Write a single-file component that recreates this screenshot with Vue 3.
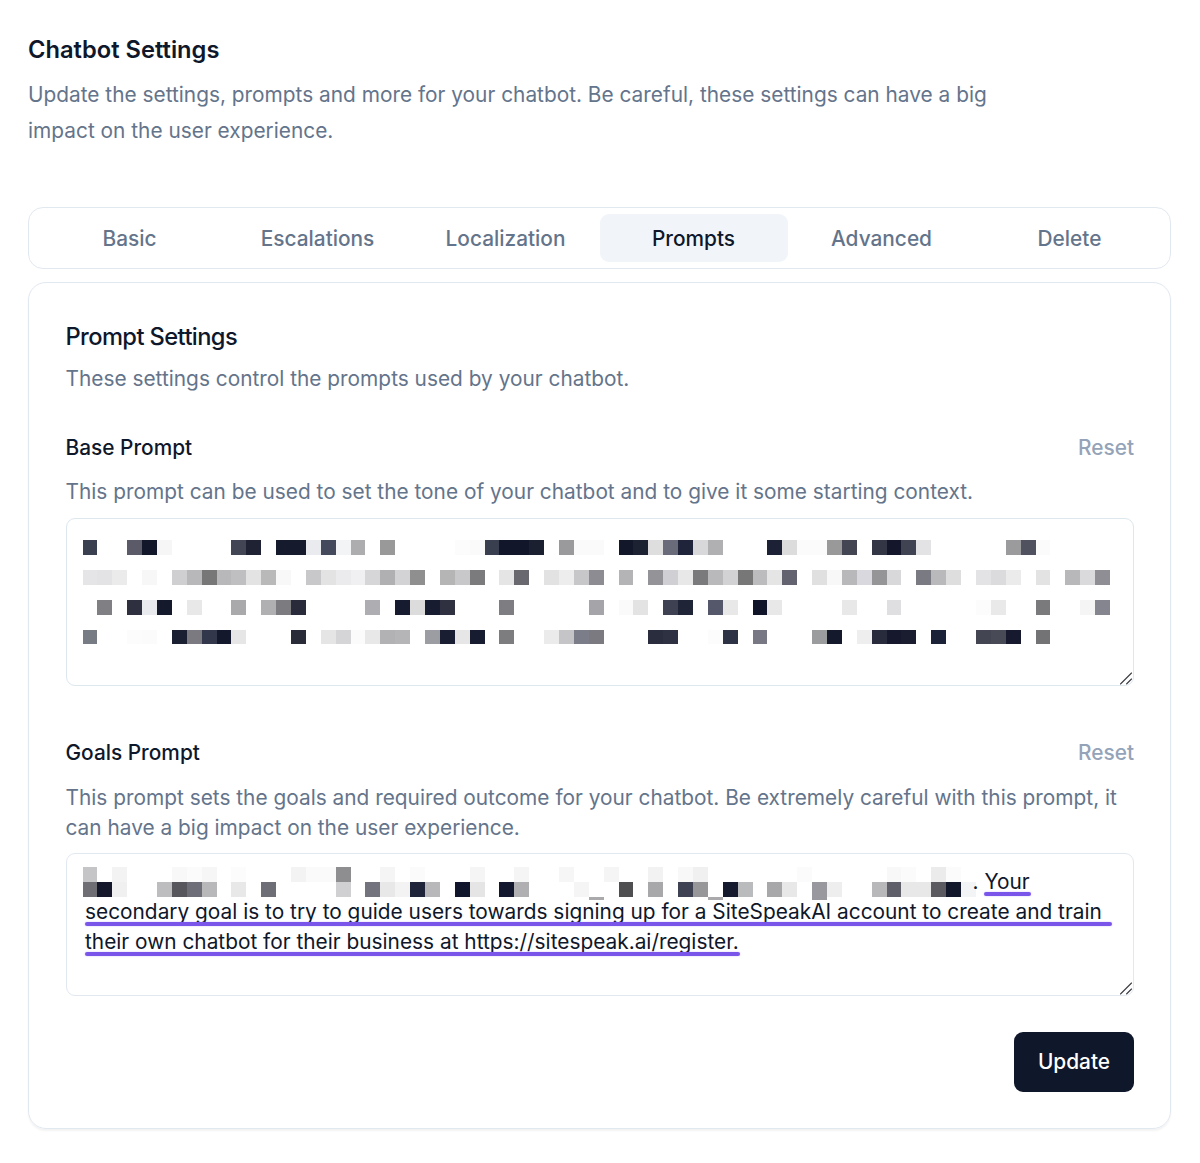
<script setup>
const parse = (spec) => {
  const cells = Array(69).fill(null).map(() => ({ bg: 'transparent', low: '' }))
  spec.trim().split(/\s+/).forEach((item) => {
    const [i, c] = item.split(':')
    if (c.startsWith('-')) cells[+i].low = '#' + c.slice(1)
    else if (c.startsWith('+')) { cells[+i].bg = '#' + c.slice(1); cells[+i].low = '#' + c.slice(1) }
    else cells[+i].bg = '#' + c
  })
  return cells
}
const cellStyle = (c) => ({ background: c.bg, boxShadow: c.low ? `0 3px 0 ${c.low}` : 'none' })

const tabs = ['Basic', 'Escalations', 'Localization', 'Prompts', 'Advanced', 'Delete']

const baseRows = [
  '0:3a4050 3:5a5a68 4:12182a 5:f6f6f7 10:414554 11:1e2232 13:151b2c 14:151b2c 15:e9ebee 16:444a5c 17:f3f4f5 18:adadb0 20:999999 25:fcfcfc 26:fafafa 27:3a3f50 28:11162a 29:11162a 30:1b2030 32:9a9a9c 33:fafafa 34:fafafa 36:12172a 37:1c2232 38:dedede 39:6a6b7a 40:20243a 41:d8d8da 42:b0b0b2 46:1c2135 47:dcdcdc 48:fbfbfb 49:fbfbfb 50:999999 51:434552 53:333645 54:14172b 55:404352 56:e3e3e6 62:9b9b9d 63:50525f 64:fbfbfb',
  '0:e5e5e7 1:e3e3e5 2:ebebec 4:f7f7f7 6:cfcfd2 7:b8b8ba 8:777777 9:b8b8ba 10:bfbfc2 11:e3e3e4 12:b9b9ba 13:f8f8f8 15:c8c8ca 16:e3e3e4 17:ebebed 18:f0f0f2 19:d6d6d9 20:b0b0b3 21:d3d3d6 22:8f8f8f 24:b5b5b5 25:c8c8ca 26:7b7b7e 28:e5e5e6 29:68686e 31:e2e2e3 32:ededee 33:c7c7ca 34:8c8c92 36:b4b4b6 38:949498 39:d0d0d4 40:e8e8e8 41:7a7a7c 42:b9b9bb 43:d2d2d4 44:777777 45:bcbcbe 46:e5e5e5 47:62636f 49:e0e0e1 50:f8f8f8 51:b8b8ba 52:d8d8de 53:959598 54:d8d8da 56:7a7a82 57:b9b9bb 58:dededf 60:e3e3e5 61:dbdbdd 62:ebebec 64:e3e3e4 66:b8b8ba 67:dadadc 68:8e8e94',
  '1:808084 3:2e3040 4:e8eaed 5:14192b 7:e8e8e8 10:a9a9ac 12:b0b0b2 13:7c7c80 14:292b3a 19:aeaeb2 21:171b30 22:dcdcdd 23:181c30 24:2f3040 28:7e7e82 34:a5a5a9 36:fafafa 37:e3e3e4 39:3e4152 40:1f2436 42:55576a 43:e8e8e9 45:0f1428 46:e8e8e9 51:e8e8e9 54:dfdfe1 60:fcfcfc 61:e9e9ea 64:7a7a7c 67:f5f5f5 68:858590',
  '0:777b84 3:fcfcfc 4:fbfbfb 6:1a1f32 7:7a7a80 8:33374c 9:14182c 10:e6e6e7 14:292b38 16:e5e5e6 17:d5d5d8 18:fbfbfb 19:e8e8e9 20:b2b2b4 21:b5b5b8 23:9b9da2 24:1a1e32 25:e6e6e7 26:171c30 28:7d7d80 31:ebebec 32:c5c5c8 33:7b7d88 34:7a7a80 38:2a2d3e 39:2e3142 42:fcfcfc 43:2d3244 45:777884 49:9b9c9e 50:141a2c 52:eeeeef 53:272b3c 54:16192d 55:1a1d30 57:1b2136 60:434652 61:484a56 62:171a2e 64:737376'
].map(parse)

const goalsTop = parse('0:c5c5c7 2:f3f3f3 6:f8f8f8 7:fbfbfb 8:f6f6f6 10:fcfcfc 14:f3f3f3 15:fafafa 16:fafafa 17:8e8e90 20:f5f5f5 22:fbfbfb 26:f5f5f5 29:f5f5f5 32:f6f6f6 35:f5f5f5 38:f2f2f2 40:f8f8f8 41:f0f0f0 48:fbfbfb 54:f8f8f8 55:fbfbfb 57:ebebec 58:fbfbfb')
const goalsBottom = parse('0:6e6e74 1:14182a 2:f0f0f0 5:bdbdbf 6:56565c 7:6e6e78 8:b8b8ba 10:e8e8e9 12:6e6e76 17:d0d0d2 19:72737c 20:e8e8e8 21:f3f3f3 22:20243a 23:b8b8ba 25:12162c 26:e5e5e6 28:14182e 29:b0b0b2 33:f5f5f5 34:-aaaaac 36:4f4f52 38:a8a8aa 40:3e4252 41:979799 42:-aaaaac 43:151a2e 44:b9bbbc 46:a8a8aa 47:e8e8e9 49:+98989e 50:eeeeee 53:b8b8ba 54:5e5f68 55:e8e8e9 56:e8e8e9 57:5a5a60 58:12172a 59:f3f4f5').slice(0, 60)
</script>

<template>
  <main class="page">
    <header class="intro">
      <h1>Chatbot Settings</h1>
      <p>Update the settings, prompts and more for your chatbot. Be careful, these settings can have a big impact on the user experience.</p>
    </header>

    <nav class="tabs">
      <button v-for="tab in tabs" :key="tab" class="tab" :class="{ active: tab === 'Prompts' }">{{ tab }}</button>
    </nav>

    <section class="card">
      <h2>Prompt Settings</h2>
      <p class="sub">These settings control the prompts used by your chatbot.</p>

      <div class="field base">
        <div class="label-row">
          <label>Base Prompt</label>
          <span class="reset">Reset</span>
        </div>
        <p class="help">This prompt can be used to set the tone of your chatbot and to give it some starting context.</p>
        <div class="box base-box">
          <div v-for="(row, r) in baseRows" :key="r" class="mosaic-row">
            <i v-for="(c, i) in row" :key="i" class="cell" :style="cellStyle(c)"></i>
          </div>
          <svg class="grip" width="14" height="14" viewBox="0 0 14 14" aria-hidden="true">
            <path d="M1.5 13 L12.5 2 M7.5 13 L12.5 8" fill="none" stroke="#3a3d44" stroke-width="1.1" stroke-linecap="round" />
          </svg>
        </div>
      </div>

      <div class="field goals">
        <div class="label-row">
          <label>Goals Prompt</label>
          <span class="reset">Reset</span>
        </div>
        <p class="help">This prompt sets the goals and required outcome for your chatbot. Be extremely careful with this prompt, it can have a big impact on the user experience.</p>
        <div class="box goals-box">
          <div class="mosaic-row">
            <i v-for="(c, i) in goalsTop" :key="i" class="cell" :style="cellStyle(c)"></i>
          </div>
          <div class="mosaic-row with-text">
            <i v-for="(c, i) in goalsBottom" :key="i" class="cell" :style="cellStyle(c)"></i>
            <span class="first-line">. <span class="mark your">Your</span></span>
          </div>
          <div class="line"><span class="mark wide">secondary goal is to try to guide users towards signing up for a SiteSpeakAI account to create and train</span></div>
          <div class="line"><span class="mark">their own chatbot for their business at https://sitespeak.ai/register.</span></div>
          <svg class="grip" width="14" height="14" viewBox="0 0 14 14" aria-hidden="true">
            <path d="M1.5 13 L12.5 2 M7.5 13 L12.5 8" fill="none" stroke="#3a3d44" stroke-width="1.1" stroke-linecap="round" />
          </svg>
        </div>
      </div>

      <div class="actions">
        <button class="update">Update</button>
      </div>
    </section>
  </main>
</template>

<style>
html, body { margin: 0; background: #fff; }
</style>

<style scoped>
.page {
  box-sizing: border-box;
  width: 1200px;
  height: 1163px;
  padding: 32px 29px 0 28px;
  font-family: Inter, "Liberation Sans", sans-serif;
  color: #0f172a;
  background: #fff;
}
.intro { height: 175px; }
h1 {
  margin: 0;
  font-size: 23.7px;
  line-height: 36px;
  font-weight: 600;
}
.intro p {
  margin: 9px 0 0;
  width: 1000px;
  font-size: 20.85px;
  line-height: 36px;
  color: #64748b;
}
.tabs {
  box-sizing: border-box;
  height: 62px;
  display: grid;
  grid-template-columns: repeat(6, 1fr);
  padding: 6px 6.5px;
  border: 1.5px solid #e2e8f0;
  border-radius: 15px;
}
.tab {
  border: 0;
  background: none;
  border-radius: 9px;
  font: 500 20.85px/30px Inter, "Liberation Sans", sans-serif;
  color: #64748b;
  padding: 2px 0 0;
}
.tab.active {
  background: #f1f5f9;
  color: #0f172a;
}
.card {
  box-sizing: border-box;
  height: 847px;
  margin-top: 13px;
  padding: 36px 36px 0 36.5px;
  border: 1.5px solid #e2e8f0;
  border-radius: 18px;
  box-shadow: 0 1.5px 2px rgba(15, 23, 42, 0.05);
}
h2 {
  margin: 0;
  font-size: 23.7px;
  line-height: 36px;
  font-weight: 500;
  letter-spacing: -0.6px;
}
.sub {
  margin: 6px 0 0;
  font-size: 20.85px;
  line-height: 36px;
  color: #64748b;
}
.field.base { margin-top: 36px; }
.field.goals { margin-top: 52px; }
.label-row {
  display: flex;
  justify-content: space-between;
  align-items: baseline;
  height: 30px;
}
label {
  font-size: 20.85px;
  font-weight: 500;
  line-height: 30px;
}
.reset {
  font-size: 20.85px;
  font-weight: 500;
  line-height: 30px;
  color: #94a3b8;
}
.help {
  margin: 14px 0 0;
  font-size: 20.85px;
  line-height: 30px;
  color: #64748b;
}
.goals .help { margin-top: 15px; }
.box {
  box-sizing: border-box;
  position: relative;
  margin-top: 11px;
  padding: 21px 0 0 16px;
  border: 1.5px solid #e2e8f0;
  border-radius: 9px;
  overflow: hidden;
  font-size: 20.85px;
  line-height: 30px;
}
.goals .box { margin-top: 10px; }
.base-box { height: 168px; border-color: #dde7ee; }
.goals-box { height: 143px; padding-top: 13px; }
.grip {
  position: absolute;
  right: 0;
  bottom: 0;
}
.mosaic-row {
  display: flex;
  height: 14.9px;
  margin-bottom: 14.96px;
}
.goals-box .mosaic-row { margin-bottom: 0; }
.cell {
  flex: none;
  display: block;
  width: 14.9px;
  height: 14.9px;
}
.with-text { position: relative; }
.first-line {
  position: absolute;
  left: 890px;
  top: -15px;
  white-space: pre;
}
.line {
  padding-left: 2.5px;
  white-space: nowrap;
}
.mark { position: relative; }
.mark::after {
  content: "";
  position: absolute;
  left: 0;
  right: -1px;
  bottom: -2px;
  height: 4px;
  border-radius: 2px;
  background: #7a55ea;
  box-shadow: 0 0 2px rgba(122, 85, 234, 0.35);
}
.mark.wide::after { right: -10px; }
.actions {
  display: flex;
  justify-content: flex-end;
  margin-top: 36px;
}
.update {
  width: 120px;
  height: 60px;
  border: 0;
  border-radius: 9px;
  background: #0f172a;
  color: #fff;
  font: 500 20.85px/30px Inter, "Liberation Sans", sans-serif;
}
</style>
